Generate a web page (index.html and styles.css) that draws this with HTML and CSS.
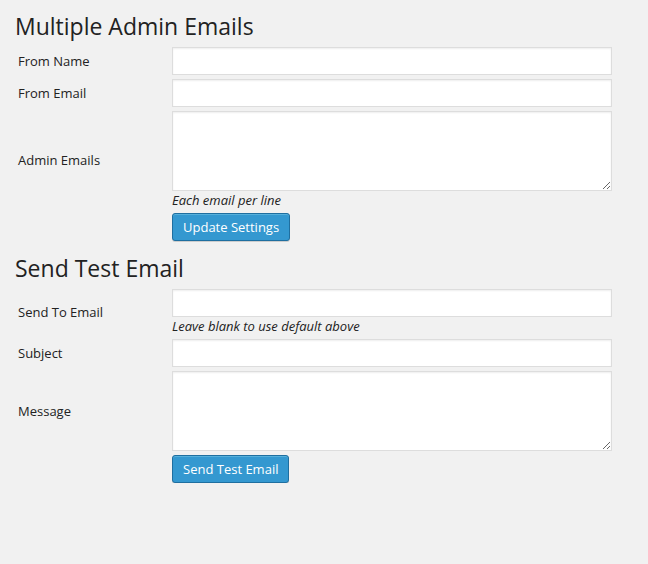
FILE: index.html
```html
<!DOCTYPE html>
<html>
<head>
<meta charset="utf-8">
<link rel="stylesheet" href="styles.css">
</head>
<body>
<div class="wrap">
  <h2 class="title">Multiple Admin Emails</h2>
  <form class="form">
    <div class="row">
      <label class="label">From Name</label>
      <div class="field"><input class="input" type="text"></div>
    </div>
    <div class="row">
      <label class="label">From Email</label>
      <div class="field"><input class="input" type="text"></div>
    </div>
    <div class="row">
      <label class="label">Admin Emails</label>
      <div class="field">
        <textarea class="textarea"></textarea>
        <p class="description">Each email per line</p>
      </div>
    </div>
    <div class="row">
      <div class="label"></div>
      <div class="field"><button type="button" class="button">Update Settings</button></div>
    </div>
  </form>

  <h2 class="title second">Send Test Email</h2>
  <form class="form">
    <div class="row">
      <label class="label">Send To Email</label>
      <div class="field">
        <input class="input" type="text">
        <p class="description">Leave blank to use default above</p>
      </div>
    </div>
    <div class="row">
      <label class="label">Subject</label>
      <div class="field"><input class="input" type="text"></div>
    </div>
    <div class="row">
      <label class="label">Message</label>
      <div class="field"><textarea class="textarea"></textarea></div>
    </div>
    <div class="row">
      <div class="label"></div>
      <div class="field"><button type="button" class="button">Send Test Email</button></div>
    </div>
  </form>
</div>
</body>
</html>
```

FILE: styles.css
```css
html, body {
  margin: 0;
  padding: 0;
  background: #f1f1f1;
  font-family: "Open Sans", "Noto Sans", sans-serif;
  color: #222;
}
.wrap {
  padding-left: 15px;
}
.title {
  font-size: 23px;
  font-weight: 400;
  line-height: 29px;
  margin: 12px 0 6px 0;
  color: #222;
}
.title.second {
  margin-top: 13px;
}
.form {
  display: flex;
  flex-direction: column;
  gap: 4px;
  margin: 0;
  padding-left: 3px;
}
.row {
  display: flex;
  align-items: center;
}
.label {
  width: 154px;
  flex: none;
  font-size: 13px;
  line-height: 20px;
  color: #222;
}
.field {
  display: flex;
  flex-direction: column;
  align-items: flex-start;
}
.input, .textarea {
  box-sizing: border-box;
  width: 440px;
  margin: 0;
  border: 1px solid #ddd;
  background: #fff;
  box-shadow: inset 0 1px 2px rgba(0,0,0,.07);
  font-family: "Open Sans", sans-serif;
  font-size: 14px;
  outline: none;
  border-radius: 0;
}
.input {
  height: 28px;
  padding: 3px 5px;
}
.textarea {
  height: 80px;
  padding: 2px 6px;
  resize: both;
  display: block;
}
.description {
  margin: 0;
  font-size: 13px;
  line-height: 18px;
  font-style: italic;
  color: #222;
}
.button {
  height: 28px;
  box-sizing: border-box;
  padding: 0 10px 1px;
  margin: 0;
  font-family: "Open Sans", sans-serif;
  font-size: 13px;
  line-height: 26px;
  color: #fff;
  background: #3498d0;
  border: 1px solid #1f6fa0;
  border-radius: 3px;
  box-shadow: inset 0 1px 0 rgba(120,200,230,.5), 0 1px 0 rgba(0,0,0,.15);
  cursor: pointer;
}
```
